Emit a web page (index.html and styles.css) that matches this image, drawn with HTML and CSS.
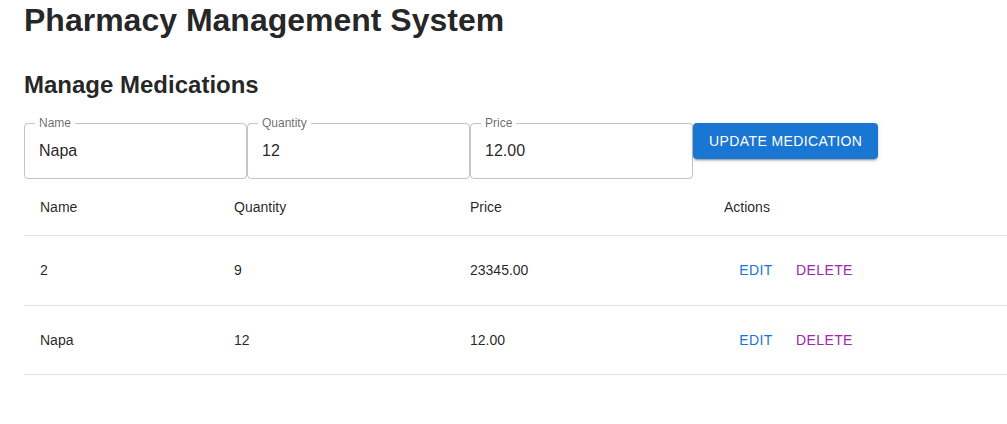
FILE: index.html
```html
<!DOCTYPE html>
<html lang="en">
<head>
<meta charset="utf-8">
<title>Pharmacy Management System</title>
<link rel="stylesheet" href="styles.css">
</head>
<body>
<div class="container">
  <h1 class="title">Pharmacy Management System</h1>
  <h2 class="subtitle">Manage Medications</h2>
  <form class="form-row">
    <div class="field">
      <label class="field-label">Name</label>
      <input class="field-input" type="text" value="Napa">
    </div>
    <div class="field">
      <label class="field-label">Quantity</label>
      <input class="field-input" type="text" value="12">
    </div>
    <div class="field">
      <label class="field-label">Price</label>
      <input class="field-input" type="text" value="12.00">
    </div>
    <button class="btn-contained" type="button">Update Medication</button>
  </form>
  <table class="table">
    <colgroup>
      <col class="col-name">
      <col class="col-qty">
      <col class="col-price">
      <col class="col-actions">
    </colgroup>
    <thead>
      <tr>
        <th>Name</th>
        <th>Quantity</th>
        <th>Price</th>
        <th>Actions</th>
      </tr>
    </thead>
    <tbody>
      <tr>
        <td>2</td>
        <td>9</td>
        <td>23345.00</td>
        <td><div class="actions"><button class="btn-text primary" type="button">Edit</button><button class="btn-text secondary" type="button">Delete</button></div></td>
      </tr>
      <tr>
        <td>Napa</td>
        <td>12</td>
        <td>12.00</td>
        <td><div class="actions"><button class="btn-text primary" type="button">Edit</button><button class="btn-text secondary" type="button">Delete</button></div></td>
      </tr>
    </tbody>
  </table>
</div>
</body>
</html>
```

FILE: styles.css
```css
* { box-sizing: border-box; }

html, body {
  margin: 0;
  padding: 0;
  background: #fff;
}

body {
  font-family: "Liberation Sans", Arial, Helvetica, sans-serif;
  color: rgba(0, 0, 0, 0.87);
}

.container {
  padding: 0 0 0 24px;
}

.title {
  margin: 2px 0 0;
  font-size: 32px;
  font-weight: bold;
  line-height: normal;
  color: rgba(0, 0, 0, 0.87);
}

.subtitle {
  margin: 32px 0 0;
  font-size: 24px;
  font-weight: bold;
  line-height: normal;
  color: rgba(0, 0, 0, 0.87);
}

.form-row {
  display: flex;
  align-items: flex-start;
  margin: 24px 0 0;
}

.field {
  position: relative;
  width: 223px;
  height: 56px;
  border: 1px solid rgba(0, 0, 0, 0.23);
  border-radius: 4px;
}

.field-label {
  position: absolute;
  left: 10px;
  top: -8px;
  padding: 0 4px;
  background: #fff;
  font-size: 12px;
  line-height: 14px;
  color: rgba(0, 0, 0, 0.6);
}

.field-input {
  display: block;
  width: 100%;
  height: 100%;
  border: 0;
  outline: none;
  background: transparent;
  padding: 0 14px;
  font-family: inherit;
  font-size: 16px;
  color: rgba(0, 0, 0, 0.87);
}

.btn-contained {
  padding: 6px 16px;
  border: 0;
  border-radius: 4px;
  background: #1976d2;
  color: #fff;
  font-family: inherit;
  font-size: 14px;
  font-weight: 500;
  line-height: 24px;
  letter-spacing: 0.4px;
  text-transform: uppercase;
  box-shadow: 0 3px 1px -2px rgba(0,0,0,0.2), 0 2px 2px 0 rgba(0,0,0,0.14), 0 1px 5px 0 rgba(0,0,0,0.12);
}

.table {
  width: 100%;
  margin-top: 0;
  border-collapse: collapse;
  table-layout: fixed;
}

.col-name { width: 194px; }
.col-qty { width: 236px; }
.col-price { width: 254px; }

.table th,
.table td {
  padding: 16px;
  text-align: left;
  font-size: 14px;
  font-weight: normal;
  line-height: 20px;
  color: rgba(0, 0, 0, 0.87);
  border-bottom: 1px solid #e0e0e0;
  vertical-align: middle;
}

.table th {
  line-height: 24px;
}

.actions {
  display: flex;
}

.btn-text {
  min-width: 64px;
  padding: 6px 8px;
  border: 0;
  background: transparent;
  font-family: inherit;
  font-size: 14px;
  font-weight: 500;
  line-height: 24.5px;
  letter-spacing: 0.4px;
  text-transform: uppercase;
  border-radius: 4px;
}

.btn-text.primary { color: #1976d2; }
.btn-text.secondary { color: #9c27b0; }
```
